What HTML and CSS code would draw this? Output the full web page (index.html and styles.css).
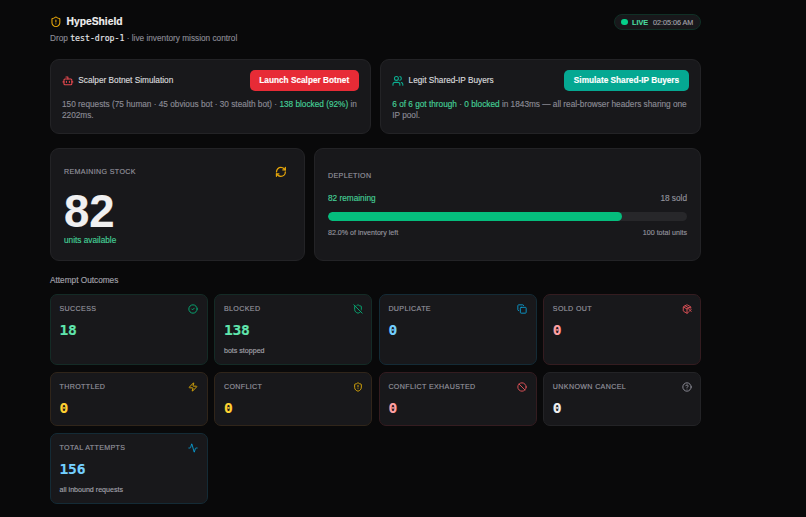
FILE: index.html
```html
<!DOCTYPE html>
<html lang="en">
<head>
  <meta charset="UTF-8">
  <meta name="viewport" content="width=device-width, initial-scale=1.0">
  <title>HypeShield</title>
  <link rel="stylesheet" href="styles.css">
</head>
<body>

  <main class="dashboard">
    <header class="header">
      <div>
        <h1 class="brand">
          <svg class="icon amber" viewBox="0 0 24 24"><path d="M20 13c0 5-3.5 7.5-7.66 8.95a1 1 0 0 1-.67-.01C7.5 20.5 4 18 4 13V6a1 1 0 0 1 1-1c2 0 4.5-1.2 6.24-2.72a1.17 1.17 0 0 1 1.52 0C14.51 3.81 17 5 19 5a1 1 0 0 1 1 1z"/><path d="M12 8v4M12 16h.01"/></svg>
          <span>HypeShield</span>
        </h1>
        <p class="subtitle">Drop <code>test-drop-1</code> · live inventory mission control</p>
      </div>
      <div class="live">
        <span class="dot"></span>
        <span class="live-label">LIVE</span>
        <span class="live-time">02:05:06 AM</span>
      </div>
    </header>

    <section class="sims">
      <div class="card sim">
        <div class="sim-head">
          <svg class="icon red" viewBox="0 0 24 24"><path d="M12 8V4H8"/><rect width="16" height="12" x="4" y="8" rx="2"/><path d="M2 14h2M20 14h2M15 13v2M9 13v2"/></svg>
          <h2 class="sim-title">Scalper Botnet Simulation</h2>
          <button class="btn btn-red">Launch Scalper Botnet</button>
        </div>
        <p class="sim-text">150 requests (75 human · 45 obvious bot · 30 stealth bot) · <b>138 blocked (92%)</b> in<br>2202ms.</p>
      </div>
      <div class="card sim">
        <div class="sim-head">
          <svg class="icon teal" viewBox="0 0 24 24"><path d="M16 21v-2a4 4 0 0 0-4-4H6a4 4 0 0 0-4 4v2"/><circle cx="9" cy="7" r="4"/><path d="M22 21v-2a4 4 0 0 0-3-3.87M16 3.13a4 4 0 0 1 0 7.75"/></svg>
          <h2 class="sim-title">Legit Shared-IP Buyers</h2>
          <button class="btn btn-teal">Simulate Shared-IP Buyers</button>
        </div>
        <p class="sim-text"><b>6 of 6 got through</b> · <b>0 blocked</b> in 1843ms — all real-browser headers sharing one<br>IP pool.</p>
      </div>
    </section>

    <section class="stock-row">
      <div class="card stock">
        <div class="stock-head">
          <span class="label">REMAINING STOCK</span>
          <svg class="icon amber refresh" viewBox="0 0 24 24"><path d="M3 12a9 9 0 0 1 9-9 9.75 9.75 0 0 1 6.74 2.74L21 8"/><path d="M21 3v5h-5"/><path d="M21 12a9 9 0 0 1-9 9 9.75 9.75 0 0 1-6.74-2.74L3 16"/><path d="M8 16H3v5"/></svg>
        </div>
        <div class="stock-value">82</div>
        <div class="stock-unit">units available</div>
      </div>
      <div class="card depletion">
        <span class="label">DEPLETION</span>
        <div class="split amounts"><span class="remaining">82 remaining</span><span>18 sold</span></div>
        <div class="bar"><div class="bar-fill" style="width: 82%"></div></div>
        <div class="split notes"><span>82.0% of inventory left</span><span>100 total units</span></div>
      </div>
    </section>

    <h2 class="section-title">Attempt Outcomes</h2>
    <section class="outcomes">
      <div class="card outcome green">
        <div class="outcome-head"><span class="label">SUCCESS</span><svg class="icon" viewBox="0 0 24 24"><circle cx="12" cy="12" r="10"/><path d="m9 12 2 2 4-4"/></svg></div>
        <div class="value">18</div>
      </div>
      <div class="card outcome green">
        <div class="outcome-head"><span class="label">BLOCKED</span><svg class="icon" viewBox="0 0 24 24"><path d="m2 2 20 20"/><path d="M5 5a1 1 0 0 0-1 1v7c0 5 3.5 7.5 7.67 8.94a1 1 0 0 0 .67.01c2.35-.82 4.48-1.97 5.9-3.71"/><path d="M9.309 3.652A12.252 12.252 0 0 0 11.24 2.28a1.17 1.17 0 0 1 1.52 0C14.51 3.81 17 5 19 5a1 1 0 0 1 1 1v7a9.784 9.784 0 0 1-.08 1.264"/></svg></div>
        <div class="value">138</div>
        <div class="hint">bots stopped</div>
      </div>
      <div class="card outcome blue">
        <div class="outcome-head"><span class="label">DUPLICATE</span><svg class="icon" viewBox="0 0 24 24"><rect width="14" height="14" x="8" y="8" rx="2"/><path d="M4 16c-1.1 0-2-.9-2-2V4c0-1.1.9-2 2-2h10c1.1 0 2 .9 2 2"/></svg></div>
        <div class="value">0</div>
      </div>
      <div class="card outcome rose">
        <div class="outcome-head"><span class="label">SOLD OUT</span><svg class="icon" viewBox="0 0 24 24"><path d="M21 10V8a2 2 0 0 0-1-1.73l-7-4a2 2 0 0 0-2 0l-7 4A2 2 0 0 0 3 8v8a2 2 0 0 0 1 1.73l7 4a2 2 0 0 0 2 0l2-1.14"/><path d="m7.5 4.27 9 5.15"/><path d="M3.29 7 12 12l8.71-5M12 22V12"/><path d="m17 13 5 5M17 18l5-5"/></svg></div>
        <div class="value">0</div>
      </div>
      <div class="card outcome yellow">
        <div class="outcome-head"><span class="label">THROTTLED</span><svg class="icon" viewBox="0 0 24 24"><path d="M4 14a1 1 0 0 1-.78-1.63l9.9-10.2a.5.5 0 0 1 .86.46l-1.92 6.02A1 1 0 0 0 13 10h7a1 1 0 0 1 .78 1.63l-9.9 10.2a.5.5 0 0 1-.86-.46l1.92-6.02A1 1 0 0 0 11 14z"/></svg></div>
        <div class="value">0</div>
      </div>
      <div class="card outcome yellow">
        <div class="outcome-head"><span class="label">CONFLICT</span><svg class="icon" viewBox="0 0 24 24"><path d="M20 13c0 5-3.5 7.5-7.66 8.95a1 1 0 0 1-.67-.01C7.5 20.5 4 18 4 13V6a1 1 0 0 1 1-1c2 0 4.5-1.2 6.24-2.72a1.17 1.17 0 0 1 1.52 0C14.51 3.81 17 5 19 5a1 1 0 0 1 1 1z"/><path d="M12 8v4M12 16h.01"/></svg></div>
        <div class="value">0</div>
      </div>
      <div class="card outcome rose">
        <div class="outcome-head"><span class="label">CONFLICT EXHAUSTED</span><svg class="icon" viewBox="0 0 24 24"><circle cx="12" cy="12" r="10"/><path d="m4.9 4.9 14.2 14.2"/></svg></div>
        <div class="value">0</div>
      </div>
      <div class="card outcome">
        <div class="outcome-head"><span class="label">UNKNOWN CANCEL</span><svg class="icon" viewBox="0 0 24 24"><circle cx="12" cy="12" r="10"/><path d="M9.09 9a3 3 0 0 1 5.83 1c0 2-3 3-3 3M12 17h.01"/></svg></div>
        <div class="value">0</div>
      </div>
      <div class="card outcome blue">
        <div class="outcome-head"><span class="label">TOTAL ATTEMPTS</span><svg class="icon" viewBox="0 0 24 24"><path d="M22 12h-2.48a2 2 0 0 0-1.93 1.46l-2.35 8.36a.25.25 0 0 1-.48 0L9.24 2.18a.25.25 0 0 0-.48 0l-2.35 8.36A2 2 0 0 1 4.49 12H2"/></svg></div>
        <div class="value">156</div>
        <div class="hint">all inbound requests</div>
      </div>
    </section>
  </main>

</body>
</html>
```
FILE: styles.css
```css
* {
  box-sizing: border-box;
  margin: 0;
  padding: 0;
}

body {
  background: #09090a;
  color: #f0f0f1;
  font-family: "Liberation Sans", Arial, sans-serif;
  font-size: 8.25px;
  height: 517px;
  overflow: hidden;
  -webkit-text-stroke: 0.15px;
}

.dashboard {
  width: 651px;
  margin-left: 50px;
  padding-top: 14px;
}

.icon {
  width: 11.8px;
  height: 11.8px;
  flex: none;
  fill: none;
  stroke: currentColor;
  stroke-width: 2.2;
  stroke-linecap: round;
  stroke-linejoin: round;
}

.amber { color: #e5a50a; }
.red { color: #e5484f; }
.teal { color: #0cae91; }

.refresh {
  stroke-width: 2.6;
}

/* Header */
.header {
  display: flex;
  justify-content: space-between;
  align-items: flex-start;
  height: 44.5px;
}

.brand {
  display: flex;
  align-items: center;
  gap: 4.7px;
  height: 15px;
  font-size: 10.3px;
}

.subtitle {
  margin-top: 2.5px;
  line-height: 12px;
  color: #8a8a94;
}

.subtitle code {
  font-family: "DejaVu Sans Mono", monospace;
  font-size: 8.2px;
  color: #e4e4e7;
}

.live {
  display: flex;
  align-items: center;
  width: 87px;
  height: 16px;
  padding-left: 6px;
  border: 1px solid #103026;
  border-radius: 8px;
  background: #18181b;
  font-size: 7.2px;
  font-weight: bold;
}

.dot {
  width: 6.5px;
  height: 6.5px;
  border-radius: 50%;
  background: #05d08a;
}

.live-label {
  margin: 0 5px 0 4.5px;
  color: #4bdba0;
}

.live-time {
  font-weight: normal;
  color: #a1a1aa;
}

.card {
  border: 1px solid #232326;
  border-radius: 9px;
  background: #18181b;
}

/* Simulations */
.sims {
  display: grid;
  grid-template-columns: 1fr 1fr;
  gap: 9.5px;
  height: 75px;
}

.sim {
  padding: 10.5px 11px;
}

.sim-head {
  display: flex;
  align-items: center;
  gap: 4.5px;
  height: 21px;
}

.sim-title {
  flex: 1;
  font-size: 8.25px;
  font-weight: normal;
  color: #d8d8dc;
}

.btn {
  height: 21px;
  border: none;
  border-radius: 5px;
  font: bold 8.25px "Liberation Sans", Arial, sans-serif;
  color: #fff;
}

.btn-red {
  width: 109px;
  background: #e72b36;
}

.btn-teal {
  width: 125px;
  background: #05a892;
}

.sim-text {
  margin-top: 7.5px;
  line-height: 11.5px;
  color: #8a8a94;
  white-space: nowrap;
}

.sim-text b {
  font-weight: normal;
  color: #45cf97;
}

/* Stock */
.stock-row {
  display: grid;
  grid-template-columns: 255px 1fr;
  gap: 9px;
  height: 113px;
  margin-top: 14.5px;
}

.stock {
  padding: 16px 17px 0 13px;
}

.stock-head {
  display: flex;
  justify-content: space-between;
  align-items: center;
  height: 13px;
}

.label {
  font-size: 7.1px;
  letter-spacing: 0.36px;
  color: #92929c;
}

.stock-value {
  margin-top: 11px;
  line-height: 45px;
  font-size: 45.5px;
  font-weight: bold;
}

.stock-unit {
  margin-top: 1px;
  line-height: 12px;
  color: #45cf97;
}

.depletion {
  padding: 22px 13px 0;
}

.depletion .label {
  display: block;
  line-height: 10px;
}

.split {
  display: flex;
  justify-content: space-between;
  color: #92929c;
}

.amounts {
  margin-top: 11.5px;
  line-height: 12px;
}

.remaining {
  color: #45cf97;
}

.bar {
  height: 9.5px;
  margin-top: 7px;
  border-radius: 5px;
  background: #27272a;
  overflow: hidden;
}

.bar-fill {
  height: 100%;
  border-radius: 5px;
  background: #05bd7d;
}

.notes {
  margin-top: 7px;
  line-height: 10px;
  font-size: 7.1px;
}

/* Outcomes */
.section-title {
  margin-top: 14px;
  line-height: 12px;
  font-size: 8.25px;
  font-weight: normal;
  color: #a1a1aa;
}

.outcomes {
  display: grid;
  grid-template-columns: repeat(4, 1fr);
  grid-template-rows: 71px 54px 71px;
  gap: 7px 6.8px;
  margin-top: 7px;
}

.outcome {
  padding: 8px 8.5px 0 8.5px;
  border-radius: 7px;
}

.outcome-head {
  display: flex;
  justify-content: space-between;
  align-items: center;
  height: 11px;
  color: #92929c;
}

.outcome .icon {
  width: 10px;
  height: 10px;
}

.value {
  margin-top: 7px;
  line-height: 18px;
  font-family: "DejaVu Sans Mono", monospace;
  font-size: 14.6px;
  font-weight: bold;
  letter-spacing: -0.2px;
}

.hint {
  margin-top: 7px;
  line-height: 10px;
  font-size: 7.1px;
  color: #a1a1aa;
}

.green { border-color: #142b26; }
.green .icon { color: #07ae76; }
.green .value { color: #60e5ae; }

.blue { border-color: #142b36; }
.blue .icon { color: #0b9bd0; }
.blue .value { color: #74d0ff; }

.rose { border-color: #341c20; }
.rose .icon { color: #e5535a; }
.rose .value { color: #ffa0a3; }

.yellow { border-color: #30251a; }
.yellow .icon { color: #e5b009; }
.yellow .value { color: #ffd132; }
```
